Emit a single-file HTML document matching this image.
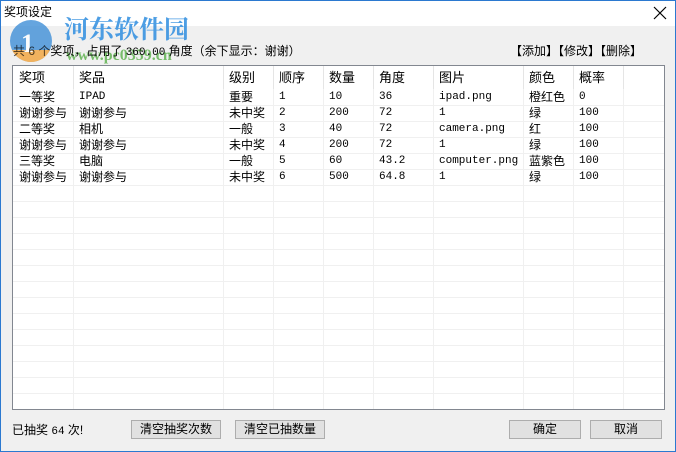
<!DOCTYPE html>
<html><head><meta charset="utf-8"><style>
*{margin:0;padding:0;box-sizing:border-box}
body{width:676px;height:452px;overflow:hidden;background:#f0f0f0;position:relative;font-family:"Liberation Sans","Noto Sans CJK SC",sans-serif;font-size:12px;color:#000}
.win{position:absolute;left:0;top:0;width:676px;height:452px;border:1px solid #2b79d0}
.title{position:absolute;left:1px;top:1px;width:674px;height:25px;background:#fff}
.a{position:absolute;white-space:nowrap}
.list{position:absolute;left:12px;top:65px;width:653px;height:345px;background:#fff;border:1px solid #828790;overflow:hidden}
.list .a{line-height:16px}
.list .h{line-height:23px;font-size:13px;top:0}
.vl{position:absolute;top:0;width:1px;height:345px;background:#f0f0f0}
.hl{position:absolute;left:0;width:653px;height:1px;background:#f0f0f0}
.mono{font-family:"Liberation Mono","Noto Sans CJK SC",monospace;font-size:11px}
.btn{position:absolute;height:19px;background:#e1e1e1;border:1px solid #adadad;text-align:center;line-height:16px;font-size:12px}
</style></head><body>
<div class="win"></div>
<div class="title"></div>
<div class="a" style="left:4px;top:3px;font-size:12px">奖项设定</div>
<svg class="a" style="left:653px;top:6px" width="14" height="14"><path d="M1 1L13 13M13 1L1 13" stroke="#000" stroke-width="1.2"/></svg>

<svg class="a" style="left:8px;top:18px;opacity:.8" width="46" height="46"><circle cx="23" cy="23" r="21" fill="#3f8fd8"/><path d="M4 32 A21 21 0 0 0 42 32 Z" fill="#f2a33a"/><text x="13" y="34" font-size="26" font-weight="bold" fill="#fff" font-family="Liberation Serif">1</text></svg>
<div class="a" style="left:64px;top:11px;font-size:25px;line-height:34px;font-weight:bold;color:#2f8ee0;font-family:'Noto Serif CJK SC',serif;opacity:.85">河东软件园</div>
<div class="a" style="left:66px;top:47px;font-size:16px;line-height:18px;font-weight:bold;color:#5ab04a;font-family:'Liberation Serif',serif;opacity:.8">www.pc0359.cn</div>

<div class="a" style="left:13px;top:43px;font-size:12px;line-height:16px"><span style="opacity:.7">共 6 个</span>奖项，占用了 <span class="mono">360.00</span> 角度（余下显示：谢谢）</div>
<div class="a" style="left:510px;top:43px;line-height:16px">【添加】【修改】【删除】</div>

<div class="list">
<div class="vl" style="left:60px"></div><div class="vl" style="left:210px"></div><div class="vl" style="left:260px"></div><div class="vl" style="left:310px"></div><div class="vl" style="left:360px"></div><div class="vl" style="left:420px"></div><div class="vl" style="left:510px"></div><div class="vl" style="left:560px"></div><div class="vl" style="left:610px"></div>
<div class="hl" style="top:39px"></div><div class="hl" style="top:55px"></div><div class="hl" style="top:71px"></div><div class="hl" style="top:87px"></div><div class="hl" style="top:103px"></div><div class="hl" style="top:119px"></div><div class="hl" style="top:135px"></div><div class="hl" style="top:151px"></div><div class="hl" style="top:167px"></div><div class="hl" style="top:183px"></div><div class="hl" style="top:199px"></div><div class="hl" style="top:215px"></div><div class="hl" style="top:231px"></div><div class="hl" style="top:247px"></div><div class="hl" style="top:263px"></div><div class="hl" style="top:279px"></div><div class="hl" style="top:295px"></div><div class="hl" style="top:311px"></div><div class="hl" style="top:327px"></div><div class="hl" style="top:343px"></div>
<div style="position:absolute;left:0;top:0;width:653px;height:23px;background:#fff"></div>

<div class="a h" style="left:6px">奖项</div><div class="a h" style="left:66px">奖品</div><div class="a h" style="left:216px">级别</div><div class="a h" style="left:266px">顺序</div><div class="a h" style="left:316px">数量</div><div class="a h" style="left:366px">角度</div><div class="a h" style="left:426px">图片</div><div class="a h" style="left:516px">颜色</div><div class="a h" style="left:566px">概率</div>
<div style="position:absolute;left:60px;top:0;width:1px;height:23px;background:#e5e5e5"></div><div style="position:absolute;left:210px;top:0;width:1px;height:23px;background:#e5e5e5"></div><div style="position:absolute;left:260px;top:0;width:1px;height:23px;background:#e5e5e5"></div><div style="position:absolute;left:310px;top:0;width:1px;height:23px;background:#e5e5e5"></div><div style="position:absolute;left:360px;top:0;width:1px;height:23px;background:#e5e5e5"></div><div style="position:absolute;left:420px;top:0;width:1px;height:23px;background:#e5e5e5"></div><div style="position:absolute;left:510px;top:0;width:1px;height:23px;background:#e5e5e5"></div><div style="position:absolute;left:560px;top:0;width:1px;height:23px;background:#e5e5e5"></div><div style="position:absolute;left:610px;top:0;width:1px;height:23px;background:#e5e5e5"></div>

<div class="a" style="left:6px;top:23px">一等奖</div><div class="a mono" style="left:66px;top:23px">IPAD</div><div class="a" style="left:216px;top:23px">重要</div><div class="a mono" style="left:266px;top:23px">1</div><div class="a mono" style="left:316px;top:23px">10</div><div class="a mono" style="left:366px;top:23px">36</div><div class="a mono" style="left:426px;top:23px">ipad.png</div><div class="a" style="left:516px;top:23px">橙红色</div><div class="a mono" style="left:566px;top:23px">0</div>
<div class="a" style="left:6px;top:39px">谢谢参与</div><div class="a" style="left:66px;top:39px">谢谢参与</div><div class="a" style="left:216px;top:39px">未中奖</div><div class="a mono" style="left:266px;top:39px">2</div><div class="a mono" style="left:316px;top:39px">200</div><div class="a mono" style="left:366px;top:39px">72</div><div class="a mono" style="left:426px;top:39px">1</div><div class="a" style="left:516px;top:39px">绿</div><div class="a mono" style="left:566px;top:39px">100</div>
<div class="a" style="left:6px;top:55px">二等奖</div><div class="a" style="left:66px;top:55px">相机</div><div class="a" style="left:216px;top:55px">一般</div><div class="a mono" style="left:266px;top:55px">3</div><div class="a mono" style="left:316px;top:55px">40</div><div class="a mono" style="left:366px;top:55px">72</div><div class="a mono" style="left:426px;top:55px">camera.png</div><div class="a" style="left:516px;top:55px">红</div><div class="a mono" style="left:566px;top:55px">100</div>
<div class="a" style="left:6px;top:71px">谢谢参与</div><div class="a" style="left:66px;top:71px">谢谢参与</div><div class="a" style="left:216px;top:71px">未中奖</div><div class="a mono" style="left:266px;top:71px">4</div><div class="a mono" style="left:316px;top:71px">200</div><div class="a mono" style="left:366px;top:71px">72</div><div class="a mono" style="left:426px;top:71px">1</div><div class="a" style="left:516px;top:71px">绿</div><div class="a mono" style="left:566px;top:71px">100</div>
<div class="a" style="left:6px;top:87px">三等奖</div><div class="a" style="left:66px;top:87px">电脑</div><div class="a" style="left:216px;top:87px">一般</div><div class="a mono" style="left:266px;top:87px">5</div><div class="a mono" style="left:316px;top:87px">60</div><div class="a mono" style="left:366px;top:87px">43.2</div><div class="a mono" style="left:426px;top:87px">computer.png</div><div class="a" style="left:516px;top:87px">蓝紫色</div><div class="a mono" style="left:566px;top:87px">100</div>
<div class="a" style="left:6px;top:103px">谢谢参与</div><div class="a" style="left:66px;top:103px">谢谢参与</div><div class="a" style="left:216px;top:103px">未中奖</div><div class="a mono" style="left:266px;top:103px">6</div><div class="a mono" style="left:316px;top:103px">500</div><div class="a mono" style="left:366px;top:103px">64.8</div><div class="a mono" style="left:426px;top:103px">1</div><div class="a" style="left:516px;top:103px">绿</div><div class="a mono" style="left:566px;top:103px">100</div>
</div>

<div class="a" style="left:12px;top:422px;line-height:16px">已抽奖 <span class="mono">64</span> 次!</div>
<div class="btn" style="left:131px;top:420px;width:90px">清空抽奖次数</div>
<div class="btn" style="left:235px;top:420px;width:90px">清空已抽数量</div>
<div class="btn" style="left:509px;top:420px;width:72px">确定</div>
<div class="btn" style="left:590px;top:420px;width:72px">取消</div>
</body></html>
